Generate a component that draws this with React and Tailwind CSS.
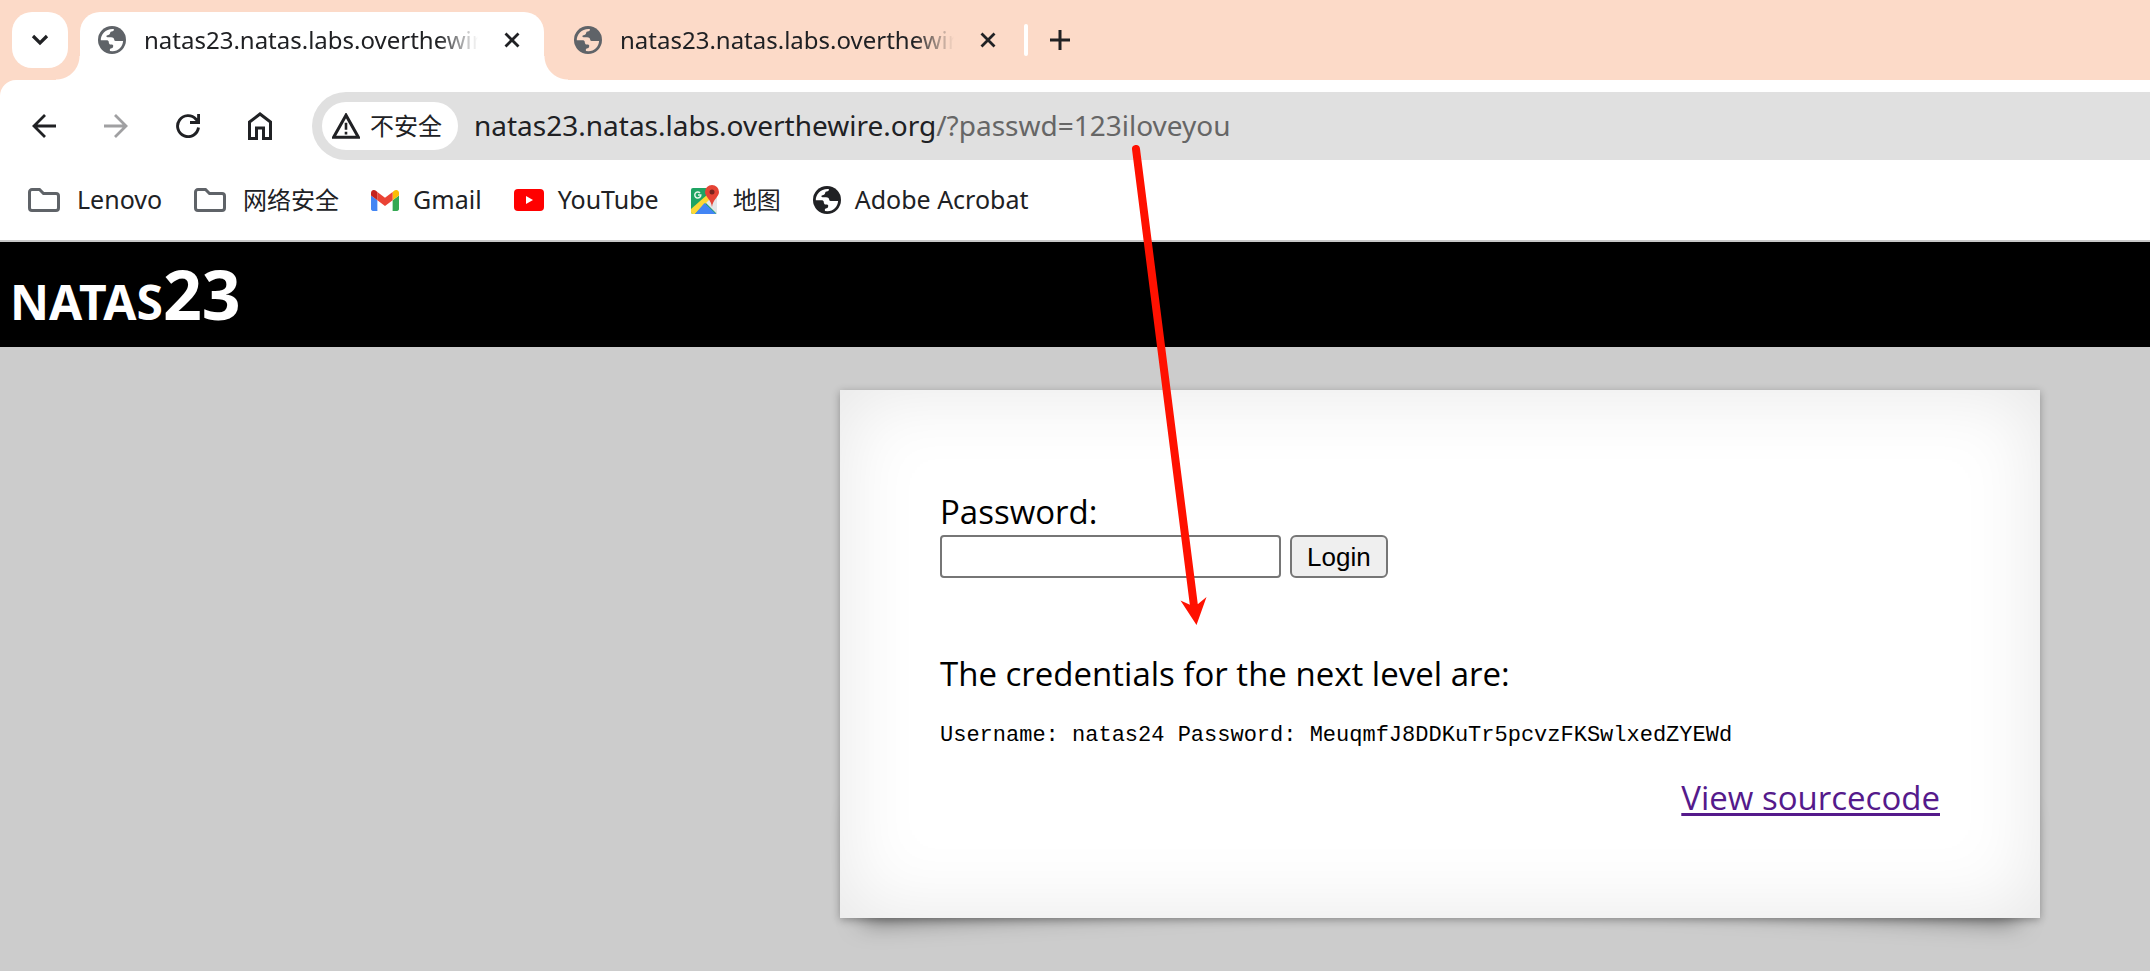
function Globe({ className, hole }) {
  return (
    <svg viewBox="0 0 28 28" className={className} aria-hidden="true">
      <circle cx="14" cy="14" r="14" fill="currentColor" />
      <path
        d="M15.800 3C16.200 4.900 15.200 5.300 13.600 5.400C12 5.500 12.300 7 11.800 8.100C11.300 9.200 9.600 9 8.800 9.600C8 10.200 8.400 11.300 9.500 11.300H13C15.300 11.300 16.200 12.400 16.300 14.300C16.800 15.500 18.200 14.800 19.500 14.900H25.100C24.800 20.500 20.300 25 14.500 25.200L12 24.900C11.400 23 12.200 22.300 13.600 22.200C15 22.100 15.200 20.800 15.200 19.700C15.200 18.600 14.200 18.600 13 18.600C11.300 18.600 10.800 17.300 10.800 16.200C10.800 14.800 9.800 14.200 8.400 14.200H2.800C2.600 8.300 8 2.300 15.800 3Z"
        className={hole}
      />
    </svg>
  );
}

function Cross() {
  return (
    <svg viewBox="0 0 16 16" className="size-4" aria-hidden="true">
      <path d="M1.500 1.500l13 13M14.500 1.500l-13 13" stroke="currentColor" strokeWidth="2.800" fill="none" />
    </svg>
  );
}

function TabContent({ hole }) {
  return (
    <>
      <Globe className="size-7 shrink-0 text-[#5f6368]" hole={hole} />
      <span className="mr-2 min-w-0 flex-1 overflow-hidden text-2xl whitespace-nowrap [mask-image:linear-gradient(to_right,#000_88%,transparent)]">
        natas23.natas.labs.overthewire.org
      </span>
      <button type="button" aria-label="关闭" className="flex">
        <Cross />
      </button>
    </>
  );
}

function Folder() {
  return (
    <svg viewBox="0 0 32 24" className="mr-[3px] h-6 w-8" aria-hidden="true">
      <path
        d="M4 1.500h7.500l4 4H28a2.500 2.500 0 0 1 2.500 2.500v12a2.500 2.500 0 0 1-2.500 2.500H4A2.500 2.500 0 0 1 1.500 20V4A2.500 2.500 0 0 1 4 1.500z"
        fill="none"
        stroke="#5f6368"
        strokeWidth="3"
      />
    </svg>
  );
}

function Gmail() {
  return (
    <svg viewBox="52 42 88 66" className="w-7" aria-hidden="true">
      <path fill="#4285f4" d="M58 108h14V74L52 59v43c0 3.320 2.690 6 6 6" />
      <path fill="#34a853" d="M120 108h14c3.320 0 6-2.690 6-6V59l-20 15" />
      <path fill="#fbbc04" d="M120 48v26l20-15v-8c0-7.420-8.470-11.650-14.400-7.200" />
      <path fill="#ea4335" d="M72 74V48l24 18 24-18v26L96 92" />
      <path fill="#c5221f" d="M52 51v8l20 15V48l-5.600-4.200c-5.940-4.450-14.400-.22-14.400 7.200" />
    </svg>
  );
}

function YouTube() {
  return (
    <svg viewBox="0 0 30 22" className="w-[30px]" aria-hidden="true">
      <rect width="30" height="22" rx="4" fill="#f00" />
      <path d="M12 7l7 4-7 4z" fill="#fff" />
    </svg>
  );
}

function Maps() {
  return (
    <svg viewBox="0 0 28 30" className="h-[30px] w-7" aria-hidden="true">
      <rect y="3" width="26" height="26" rx="2" fill="#1fa463" />
      <path d="M13 16L26 29V10l-5 4z" fill="#e4e6e8" />
      <path d="M0 24L17 9l3 4L4 29H2a2 2 0 0 1-2-2z" fill="#fdd835" />
      <path d="M13.500 18L4 29h21z" fill="#4285f4" />
      <path d="M9 8a3 3 0 1 0 .8 2H7" fill="none" stroke="#e8f5e9" strokeWidth="1.500" />
      <path d="M21 0a7 7 0 0 1 7 7c0 5-6 7-7 15-1-8-7-10-7-15a7 7 0 0 1 7-7z" fill="#e54335" />
      <circle cx="21" cy="7" r="2.500" fill="#7b231e" />
    </svg>
  );
}

function Bookmark({ icon, children, cjk }) {
  return (
    <a href="#" className="flex items-center gap-[14px]">
      {icon}
      <span className={cjk ? "text-[24px]" : "text-[25px]"}>{children}</span>
    </a>
  );
}

export default function App() {
  return (
    <div className="relative flex min-h-screen flex-col overflow-hidden bg-[#cccccc] font-['Noto_Sans','Noto_Sans_CJK_SC',sans-serif] text-[#202124]">
      <header className="bg-[#fcdac8]">
        <div className="flex h-20 items-end">
          <button
            type="button"
            aria-label="搜索标签页"
            className="mb-3 ml-3 flex size-14 items-center justify-center rounded-[20px] bg-white"
          >
            <svg viewBox="0 0 18 12" className="w-[18px]" aria-hidden="true">
              <path d="M2 2l7 7 7-7" fill="none" stroke="currentColor" strokeWidth="3.200" />
            </svg>
          </button>
          <div className="relative ml-3 flex h-[68px] w-[464px] items-center gap-[18px] rounded-t-[20px] bg-white pr-6 pb-3 pl-[18px]">
            <span className="absolute right-full bottom-0 size-6 bg-[radial-gradient(circle_at_0_0,transparent_23px,#fff_24px)]" />
            <span className="absolute bottom-0 left-full size-6 bg-[radial-gradient(circle_at_100%_0,transparent_23px,#fff_24px)]" />
            <TabContent hole="fill-white" />
          </div>
          <div className="ml-3 flex h-[68px] w-[464px] items-center gap-[18px] pr-6 pb-3 pl-[18px]">
            <TabContent hole="fill-[#fcdac8]" />
          </div>
          <div className="ml-1 flex h-[68px] items-center gap-[22px] pb-3">
            <span className="h-8 w-1 rounded-full bg-white" />
            <button type="button" aria-label="新标签页" className="flex">
              <svg viewBox="0 0 20 20" className="size-5" aria-hidden="true">
                <path d="M10 0v20M0 10h20" stroke="currentColor" strokeWidth="3" />
              </svg>
            </button>
          </div>
        </div>
        <div className="rounded-tl-2xl border-b-2 border-[#c8c8c8] bg-white">
          <div className="flex items-center pt-3 pl-5">
            <div className="mr-7 flex items-center gap-6">
              <button type="button" aria-label="后退" className="flex size-12 items-center justify-center">
                <svg viewBox="0 0 24 24" className="size-6" aria-hidden="true">
                  <path d="M13 1L2 12l11 11M2 12h22" fill="none" stroke="currentColor" strokeWidth="2.800" />
                </svg>
              </button>
              <button type="button" aria-label="前进" className="flex size-12 items-center justify-center text-[#a0a0a2]">
                <svg viewBox="0 0 24 24" className="size-6" aria-hidden="true">
                  <path d="M11 1l11 11-11 11M22 12H0" fill="none" stroke="currentColor" strokeWidth="2.800" />
                </svg>
              </button>
              <button type="button" aria-label="重新加载" className="flex size-12 items-center justify-center">
                <svg viewBox="0 0 24 24" className="size-6" aria-hidden="true">
                  <path
                    d="M22.500 13.500A10.500 10.500 0 1 1 20 5.200L22.500 8.500M22.600 0v8.500H14"
                    fill="none"
                    stroke="currentColor"
                    strokeWidth="2.900"
                  />
                </svg>
              </button>
              <button type="button" aria-label="主页" className="flex size-12 items-center justify-center">
                <svg viewBox="0 0 24 28" className="h-7 w-6" aria-hidden="true">
                  <path
                    d="M1.500 26.500V10L12 2l10.500 8v16.500h-7V16h-7v10.500z"
                    fill="none"
                    stroke="currentColor"
                    strokeWidth="3"
                  />
                </svg>
              </button>
            </div>
            <div className="flex h-[68px] flex-1 items-center gap-4 rounded-l-full bg-[#e0e0e0] pl-[10px]">
              <button type="button" className="flex h-12 items-center gap-[10px] rounded-full bg-white pr-4 pl-[10px]">
                <svg viewBox="1 1 26 24" className="w-7" aria-hidden="true">
                  <path d="M14 3L2.500 23.500h23z" fill="none" stroke="currentColor" strokeWidth="2.800" />
                  <path d="M14 10v6.500M14 18.500v2.500" stroke="currentColor" strokeWidth="2.400" />
                </svg>
                <span className="text-2xl">不安全</span>
              </button>
              <p className="pb-0.5 text-[28px] whitespace-nowrap">
                natas23.natas.labs.overthewire.org<span className="text-[#666666]">/?passwd=123iloveyou</span>
              </p>
            </div>
          </div>
          <nav className="flex h-20 items-center gap-8 pl-7">
            <Bookmark icon={<Folder />}>Lenovo</Bookmark>
            <Bookmark icon={<Folder />} cjk>网络安全</Bookmark>
            <Bookmark icon={<Gmail />}>Gmail</Bookmark>
            <Bookmark icon={<YouTube />}>YouTube</Bookmark>
            <Bookmark icon={<Maps />} cjk>地图</Bookmark>
            <Bookmark icon={<Globe className="size-7" hole="fill-white" />}>Adobe Acrobat</Bookmark>
          </nav>
        </div>
      </header>

      <h1 className="bg-black pt-2 pb-[9px] pl-[10px] text-[68px] leading-[88px] font-bold text-white">
        <span className="text-[48px] leading-none">NATAS</span>23
      </h1>

      <main className="mt-[43px] mr-[110px] mb-[53px] flex justify-end">
        <div className="relative isolate w-[1200px]">
          <span className="absolute bottom-6 left-5 -z-10 h-1/5 w-1/2 -rotate-3 shadow-[0_12px_24px_rgba(0,0,0,0.5)]" />
          <span className="absolute right-5 bottom-6 -z-10 h-1/5 w-1/2 rotate-3 shadow-[0_12px_24px_rgba(0,0,0,0.5)]" />
          <div className="bg-white px-[100px] pt-[99px] pb-[97px] font-['Open_Sans',sans-serif] text-[33px] leading-[46px] text-black shadow-[0_2px_8px_rgba(0,0,0,0.3),inset_0_0_80px_rgba(0,0,0,0.1)]">
            <form onSubmit={(e) => e.preventDefault()}>
              <label htmlFor="passwd" className="block">Password:</label>
              <div className="flex gap-[9px]">
                <input
                  id="passwd"
                  name="passwd"
                  className="h-[43px] w-[341px] rounded-[4px] border-2 border-[#767676] bg-white px-1 text-[26px]"
                />
                <button
                  type="submit"
                  className="flex h-[43px] items-center rounded-[6px] border-2 border-[#767676] bg-[#efefef] px-[15px] font-['Liberation_Sans',sans-serif] text-[26px]"
                >
                  Login
                </button>
              </div>
            </form>
            <p className="mt-[73px]">The credentials for the next level are:</p>
            <pre className="mt-6 font-['Liberation_Mono',monospace] text-[22px] leading-[30px]">
              Username: natas24 Password: MeuqmfJ8DDKuTr5pcvzFKSwlxedZYEWd
            </pre>
            <div className="mt-6 text-right">
              <a href="#" className="text-[#551a8b] underline decoration-[3px] underline-offset-[3px]">View sourcecode</a>
            </div>
          </div>
        </div>
      </main>

      <svg
        viewBox="1130 140 90 490"
        className="pointer-events-none absolute top-[140px] left-[1130px] h-[490px] w-[90px]"
        aria-hidden="true"
      >
        <path d="M1136 149L1194 606" stroke="#ff1100" strokeWidth="8" strokeLinecap="round" />
        <path d="M1196.500 625L1180.500 600.500L1190.500 605L1198 604L1206.500 597Z" fill="#ff1100" />
      </svg>
    </div>
  );
}
